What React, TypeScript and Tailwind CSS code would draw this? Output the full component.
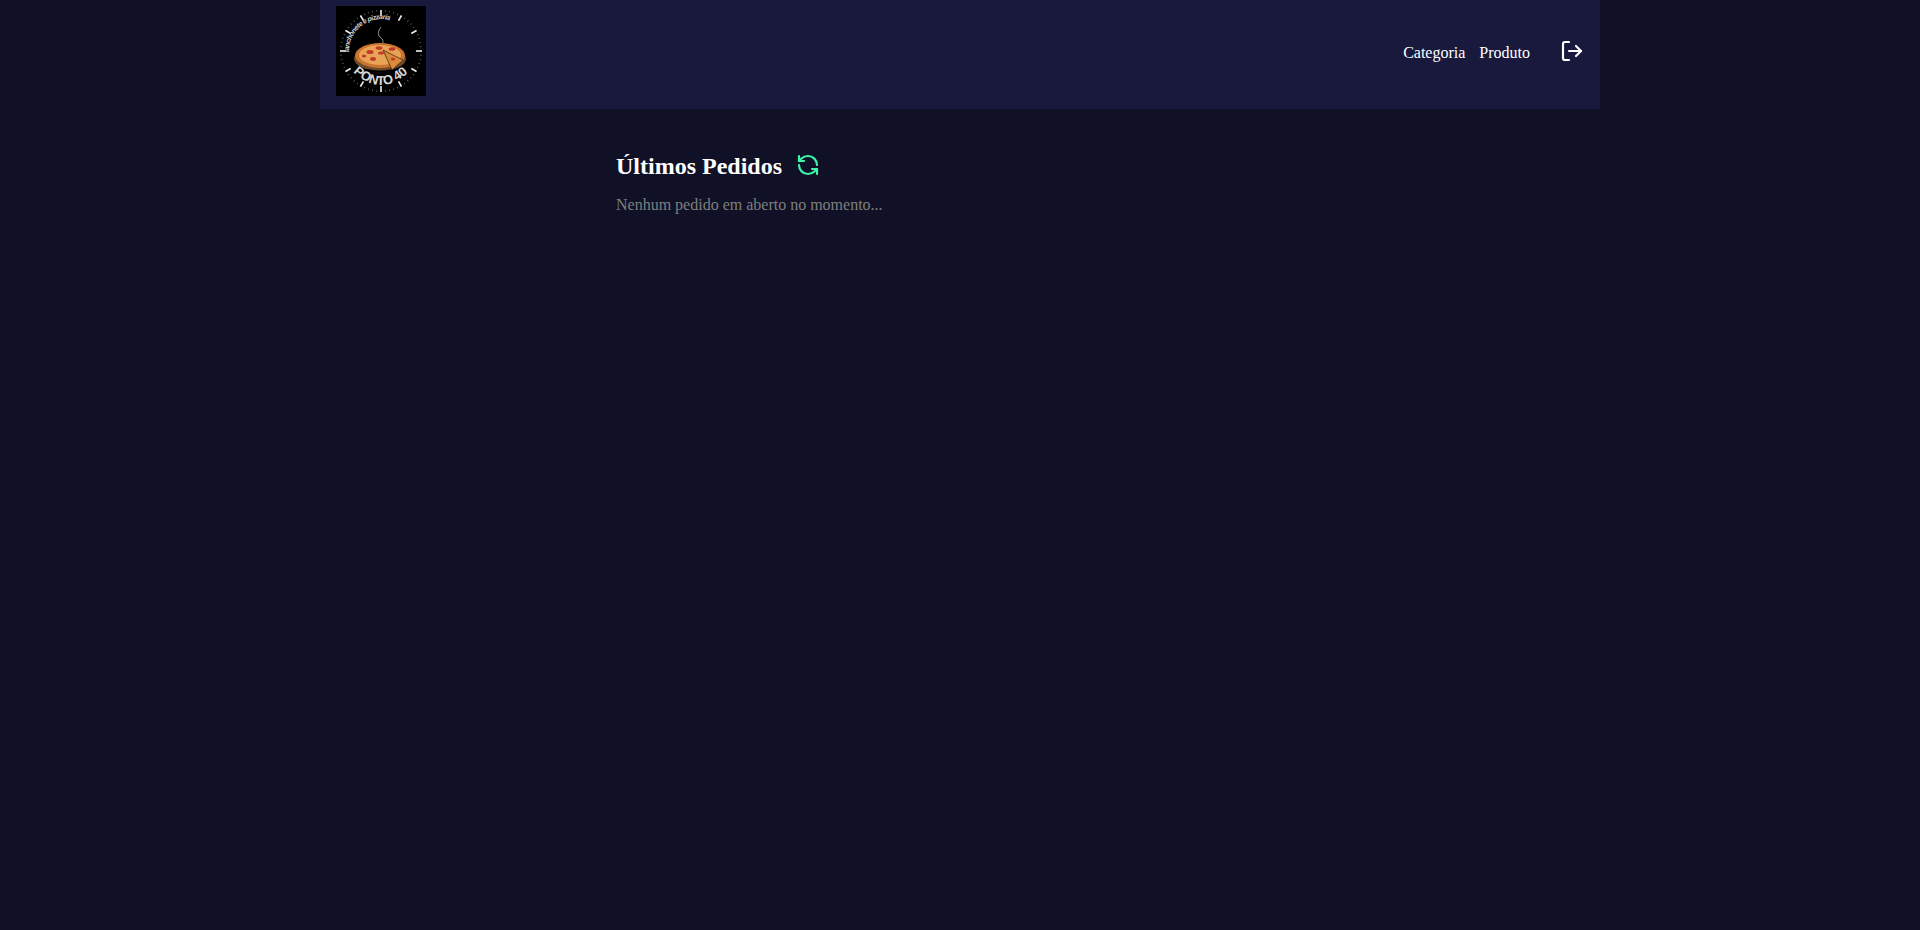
import { LogOut, RefreshCcw } from "lucide-react";

function Logo() {
  const ticks = Array.from({ length: 12 }, (_, i) => i * 30);
  const dots = Array.from({ length: 60 }, (_, i) => i * 6);
  return (
    <svg viewBox="0 0 90 90" className="w-[90px] h-[90px] bg-black shrink-0">
      {/* clock face */}
      {dots.map((deg) => (
        <rect key={deg} x="44.7" y="4" width="0.6" height="1.6" fill="#8a8a8a" transform={`rotate(${deg} 45 45)`} />
      ))}
      {ticks.map((deg) => (
        <rect
          key={deg}
          x="44.2"
          y="4"
          width="1.6"
          height="6"
          fill="#ececec"
          transform={`rotate(${deg} 45 45)`}
        />
      ))}
      <defs>
        <path id="logo-top" d="M13 46 A32 32 0 0 1 62 18" />
        <path id="logo-bottom" d="M17 66 Q45 92 73 66" />
      </defs>
      <text fontFamily="'Liberation Sans', sans-serif" fontSize="7" fontWeight="700" fontStyle="italic" fill="#cfcfcf">
        <textPath href="#logo-top" textLength="60">lanchonete e pizzaria</textPath>
      </text>
      <text fontFamily="'Liberation Sans', sans-serif" fontSize="13" fontWeight="700" fill="#d8d8d8">
        <textPath href="#logo-bottom" textLength="62">PONTO 40</textPath>
      </text>
      {/* smoke */}
      <path d="M45 21 C41 26 42 30 45 32 C47 33 47 35 47 37" fill="none" stroke="#a3a3a3" strokeWidth="0.9" />
      {/* pizza */}
      <ellipse cx="44" cy="53" rx="26" ry="11.5" fill="#6e4a2a" />
      <ellipse cx="44" cy="49.5" rx="25" ry="12.5" fill="#c9752f" />
      <ellipse cx="44" cy="49" rx="21" ry="10" fill="#e8a356" />
      <ellipse cx="34" cy="46" rx="3.6" ry="2" fill="#c23a26" />
      <ellipse cx="43" cy="42" rx="3.4" ry="1.8" fill="#c23a26" />
      <ellipse cx="37" cy="53" rx="3" ry="1.9" fill="#c23a26" />
      <ellipse cx="28" cy="50" rx="2.2" ry="1.6" fill="#c23a26" />
      <ellipse cx="56" cy="43" rx="3.4" ry="1.8" fill="#c23a26" />
      <ellipse cx="45" cy="47" rx="3" ry="1.6" fill="#c23a26" />
      <path d="M47 44 L67 54 L56 64 Z" fill="#d98a3a" stroke="#4a2a10" strokeWidth="0.8" />
      <ellipse cx="57" cy="53" rx="2.2" ry="1.5" fill="#c23a26" />
    </svg>
  );
}

export default function App() {
  return (
    <div className="min-h-screen bg-[#101126] text-white font-['Liberation_Serif',serif]">
      {/* Header */}
      <header className="w-[1280px] h-[109px] mx-auto px-4 pb-[13px] pt-[6px] bg-[#18193c] flex justify-between">
        <Logo />
        <nav className="flex items-center gap-[14px] text-base">
          <a className="pt-[4px]">Categoria</a>
          <a className="pt-[4px]">Produto</a>
          <button className="ml-4">
            <LogOut size={24} strokeWidth={2.2} />
          </button>
        </nav>
      </header>

      {/* Orders */}
      <main className="w-[720px] mx-auto px-4 mt-[41px]">
        <div className="flex items-center gap-[14px]">
          <h1 className="text-2xl font-bold">Últimos Pedidos</h1>
          <button className="-mt-[2px]">
            <RefreshCcw size={24} strokeWidth={2.2} className="text-[#3df5a6]" />
          </button>
        </div>
        <p className="mt-[11px] text-base text-[#7f7f7f]">Nenhum pedido em aberto no momento...</p>
      </main>
    </div>
  );
}
